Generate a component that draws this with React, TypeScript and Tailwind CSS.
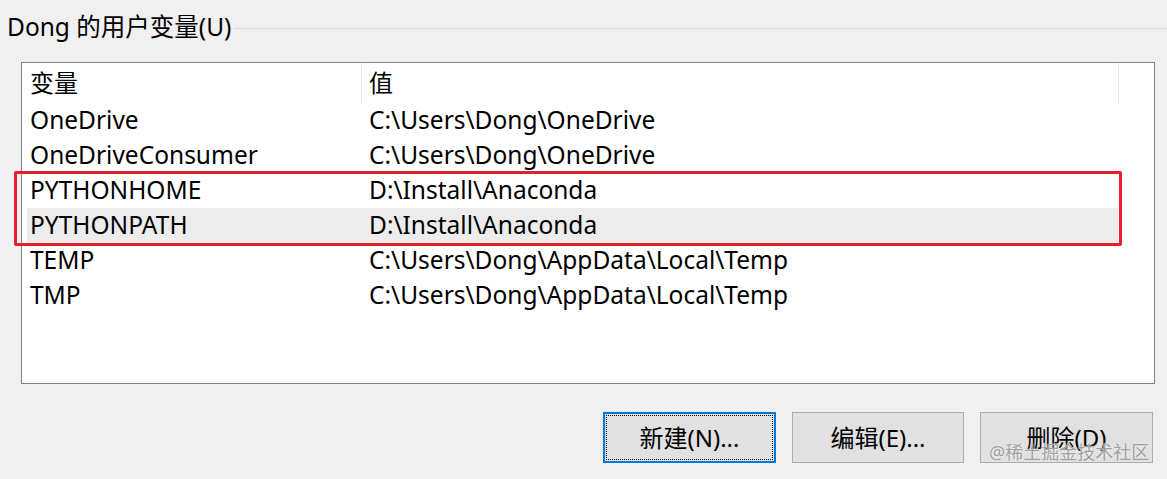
import React from "react";

const font = { fontFamily: '"Noto Sans", "Noto Sans CJK SC", sans-serif' };

const rows: [string, string, boolean][] = [
  ["OneDrive", "C:\\Users\\Dong\\OneDrive", false],
  ["OneDriveConsumer", "C:\\Users\\Dong\\OneDrive", false],
  ["PYTHONHOME", "D:\\Install\\Anaconda", false],
  ["PYTHONPATH", "D:\\Install\\Anaconda", true],
  ["TEMP", "C:\\Users\\Dong\\AppData\\Local\\Temp", false],
  ["TMP", "C:\\Users\\Dong\\AppData\\Local\\Temp", false],
];

export default function App() {
  return (
    <div
      className="relative w-[1167px] h-[479px] bg-[#f0f0f0] text-[#000] overflow-hidden flex flex-col"
      style={font}
    >
      <div className="flex items-center h-[54px] pl-[7px]">
        <span className="text-[24.5px] leading-[30px] whitespace-nowrap">Dong 的用户变量(U)</span>
        <div className="flex-1 h-px bg-[#dcdcdc] ml-[3px] mt-[2px]" />
      </div>
      <div className="ml-[21px] mt-[8px] w-[1134px] h-[322px] bg-white border border-[#828282] pl-[5px]">
        <div className="flex h-[40px] w-[1092px] items-center text-[24px]">
          <div className="w-[334px] pl-[3px] h-full flex items-center">变量</div>
          <div className="w-px h-full bg-[#e5e5e5]" />
          <div className="flex-1 pl-[7px] h-full flex items-center">值</div>
          <div className="w-px h-full bg-[#e5e5e5]" />
        </div>
        {rows.map(([k, v, hl]) => (
          <div
            key={k}
            className={`flex h-[35px] w-[1091px] items-center text-[24.5px] ${hl ? "bg-[#ececec]" : ""}`}
          >
            <div className="w-[335px] pl-[3px] whitespace-nowrap">{k}</div>
            <div className="flex-1 pl-[7px] whitespace-nowrap">{v}</div>
          </div>
        ))}
      </div>
      <div className="flex ml-[603px] mt-[28px] gap-[16px]">
        <button className="w-[173px] h-[51px] bg-[#e1e1e1] border-2 border-[#0078d7] p-px text-[24px]">
          <div className="w-full h-full border border-dotted border-[#000] flex items-center justify-center">新建(N)...</div>
        </button>
        <button className="w-[172px] h-[51px] bg-[#e1e1e1] border border-[#adadad] text-[24px] flex items-center justify-center">
          编辑(E)...
        </button>
        <button className="w-[173px] h-[51px] bg-[#e1e1e1] border border-[#adadad] text-[24px] flex items-center justify-center">
          删除(D)
        </button>
      </div>
      <div className="absolute left-[14px] top-[171px] w-[1108px] h-[75px] border-[3px] border-[#e3202c] rounded-[2px]" />
      <div
        className="absolute left-[989px] top-[440px] text-[18px] leading-[24px] text-[#a0a0a0] whitespace-nowrap"
        style={{ textShadow: "0 0 2px #fff" }}
      >
        @稀土掘金技术社区
      </div>
    </div>
  );
}
